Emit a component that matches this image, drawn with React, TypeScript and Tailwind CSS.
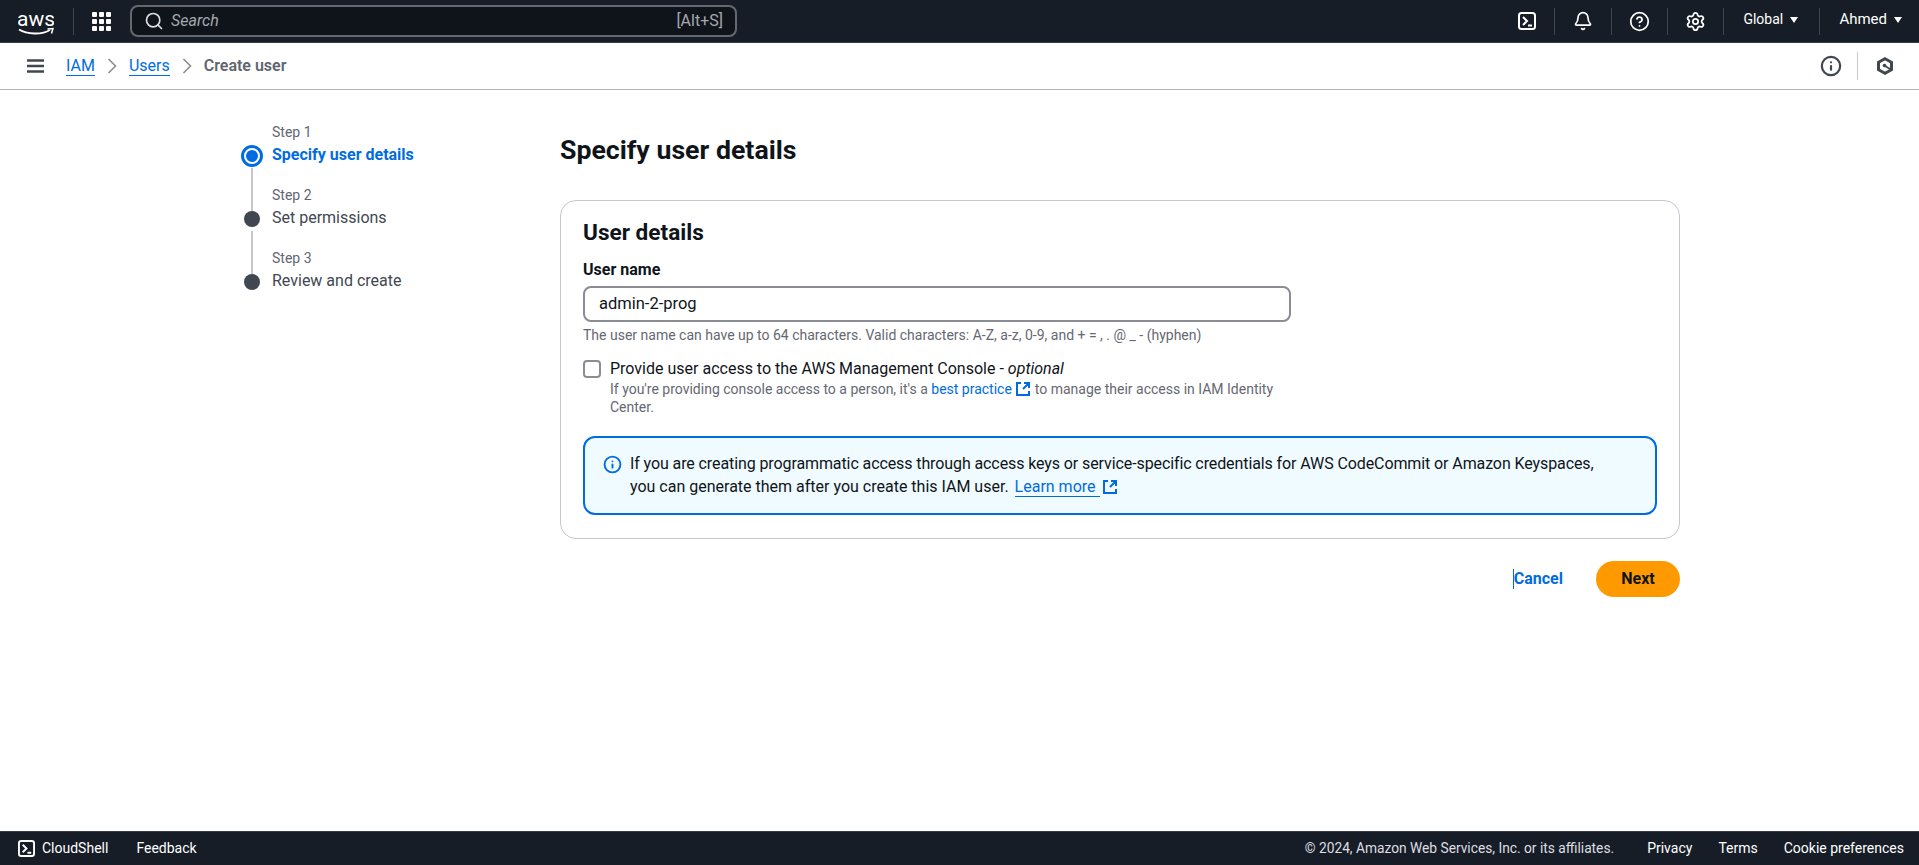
import { Bell, CircleHelp, Settings, Search, Info } from "lucide-react";

const font = "font-['Roboto',sans-serif]";

// Square terminal icon used in the top bar and the footer
const ShellIcon = ({ size = 18 }: { size?: number }) => (
  <svg width={size} height={size} viewBox="0 0 18 18" fill="none" stroke="currentColor" strokeWidth="2">
    <rect x="1" y="1" width="16" height="16" rx="2.5" />
    <path d="M5 5l4 4-4 4M10 13.5h4" />
  </svg>
);

const ExternalIcon = () => (
  <svg width="16" height="16" viewBox="0 0 16 16" fill="none" stroke="#006ce0" strokeWidth="2" className="inline-block align-[-3px]">
    <path d="M6 2H2v12h12v-4M9 2h5v5M14 2 8 8" />
  </svg>
);

const AwsLogo = () => (
  <svg width="36" height="31" viewBox="0 0 36 31" fill="none">
    <text x="18" y="20" textAnchor="middle" fill="#fff" fontSize="21" fontFamily="Roboto, sans-serif">aws</text>
    <path d="M1 23.5c8 5 23 5.5 31 .5" stroke="#fff" strokeWidth="1.8" />
    <path d="M29.5 23 35 22.5l-1.5 5" stroke="#fff" strokeWidth="1.5" />
  </svg>
);

const Divider = () => <div className="w-px h-[27px] bg-[#414750]" />;

const Caret = () => <span className="w-0 h-0 border-x-[4.5px] border-x-transparent border-t-[6px] border-t-white mt-[2px]" />;

const TopNav = () => (
  <header className="h-[43px] shrink-0 bg-[#161d26] border-b border-[#333b45] flex items-center text-white">
    <div className="w-[73px] pl-[18px] pt-[1px]">
      <AwsLogo />
    </div>
    <Divider />
    <div className="ml-[18px] w-[19px] grid grid-cols-3 gap-[2px]">
      {Array.from({ length: 9 }).map((_, i) => (
        <div key={i} className="h-[5px] bg-white rounded-[1px]" />
      ))}
    </div>
    <div className="ml-[19px] w-[607px] h-[32px] rounded-[8px] border-2 border-[#656871] bg-[#0f141a] flex items-center pl-[12px] pr-[12px] text-[16px]">
      <Search size={20} strokeWidth={2} className="text-[#dedee3]" />
      <span className="ml-[7px] italic text-[#a4a8b0]">Search</span>
      <span className="ml-auto text-[#a4a8b0]">[Alt+S]</span>
    </div>
    <div className="ml-auto flex items-center text-[14px]">
      <ShellIcon />
      <div className="ml-[18px]"><Divider /></div>
      <Bell size={20} strokeWidth={2} className="mx-[18px]" />
      <Divider />
      <CircleHelp size={21} strokeWidth={2} className="mx-[17px]" />
      <Divider />
      <Settings size={21} strokeWidth={2} className="mx-[17px]" />
      <Divider />
      <span className="ml-[19px] flex items-center gap-[7px] w-[76px] mb-[4px]">Global <Caret /></span>
      <Divider />
      <span className="ml-[19px] mr-[17px] flex items-center gap-[7px] text-[15px] mb-[4px]">Ahmed <Caret /></span>
    </div>
  </header>
);

const CrumbChevron = () => (
  <svg width="10" height="16" viewBox="0 0 10 16" fill="none" stroke="#8c8c94" strokeWidth="1.6" className="mx-[12px]">
    <path d="M1.5 1 8.5 8l-7 7" />
  </svg>
);

const Breadcrumbs = () => (
  <div className="h-[47px] shrink-0 border-b border-[#b4b4bb] flex items-center text-[16px] text-[#414750]">
    <svg width="17" height="14" viewBox="0 0 17 14" fill="none" stroke="#414750" strokeWidth="2.4" className="ml-[27px]">
      <path d="M0 1.5h17M0 7h17M0 12.5h17" />
    </svg>
    <a className="ml-[22px] text-[#006ce0] border-b border-[#006ce0] leading-[19px]">IAM</a>
    <CrumbChevron />
    <a className="text-[#006ce0] border-b border-[#006ce0] leading-[19px]">Users</a>
    <CrumbChevron />
    <span className="font-semibold text-[#5f6670]">Create user</span>
    <div className="ml-auto flex items-center">
      <Info size={22} strokeWidth={2.4} />
      <div className="w-px h-[28px] bg-[#c6c6cd] ml-[15px]" />
      <svg width="18" height="18" viewBox="0 0 18 18" fill="none" stroke="#414750" strokeWidth="3" className="ml-[18px] mr-[25px]">
        <path d="M9 1.7 15.5 5.3v7.4L9 16.3 2.5 12.7V5.3z" />
        <circle cx="8.5" cy="8.5" r="1.8" fill="#414750" stroke="none" />
        <path d="M9 9l5 3" strokeWidth="1.8" />
      </svg>
    </div>
  </div>
);

const Step = ({ n, label, active }: { n: number; label: string; active?: boolean }) => (
  <div className="flex h-[63px] relative">
    {!active && <div className="absolute top-[3px] left-[10px] w-[2px] h-[43px] bg-[#c6c6cd]" />}
    <div className="w-[22px] flex flex-col items-center justify-end">
      {active ? (
        <div className="w-[22px] h-[22px] rounded-full border-[3px] border-[#006ce0] flex items-center justify-center mb-[-2px]">
          <div className="w-[12px] h-[12px] rounded-full bg-[#006ce0]" />
        </div>
      ) : (
        <div className="w-[16px] h-[16px] rounded-full bg-[#414750] mb-[1px]" />
      )}
    </div>
    <div className="ml-[9px] flex flex-col justify-end">
      <div className="text-[14px] leading-[18px] mb-[3px] text-[#5f6670]">Step {n}</div>
      <div className={active ? "text-[16px] leading-[22px] mb-[-1px] font-bold text-[#006ce0]" : "text-[16px] leading-[22px] mb-[-1px] text-[#414750]"}>{label}</div>
    </div>
  </div>
);

const UserDetailsCard = () => (
  <section className="mt-[33px] h-[339px] rounded-[16px] border border-[#c6c6cd] pt-[18px] px-[22px] text-[#0f141a]">
    <h2 className="text-[22.6px] leading-[28px] font-bold">User details</h2>
    <label className="block mt-[13px] text-[16px] leading-[20px] font-bold">User name</label>
    <div className="mt-[6px] w-[708px] h-[36px] rounded-[8px] border-2 border-[#8c8c94] flex items-center pl-[14px] pt-[1px] text-[16.5px]">admin-2-prog</div>
    <p className="mt-[4px] text-[14px] leading-[18px] text-[#656871]">
      The user name can have up to 64 characters. Valid characters: A-Z, a-z, 0-9, and + = , . @ _ - (hyphen)
    </p>
    <div className="mt-[13px] flex">
      <div className="w-[18px] h-[18px] mt-[3px] rounded-[4px] border-2 border-[#8c8c94] shrink-0" />
      <div className="ml-[9px] w-[670px]">
        <div className="text-[16px] leading-[22px] pt-[1px]">Provide user access to the AWS Management Console - <i>optional</i></div>
        <div className="text-[14px] leading-[18px] text-[#656871]">
          If you're providing console access to a person, it's a <a className="text-[#006ce0]">best practice</a> <ExternalIcon /> to manage their access in IAM Identity Center.
        </div>
      </div>
    </div>
    <div className="mt-[20px] h-[79px] rounded-[12px] border-2 border-[#006ce0] bg-[#f0fbff] flex pt-[14px] pl-[18px] text-[16px] leading-[23px]">
      <Info size={19} strokeWidth={2.4} className="text-[#006ce0] mt-[3px] shrink-0" />
      <div className="ml-[8px] w-[985px]">
        <span className="tracking-[-0.1px]">If you are creating programmatic access through access keys or service-specific credentials for AWS CodeCommit or Amazon Keyspaces,</span> you can generate them after you create this IAM user.{" "}
        <a className="ml-[2px] text-[#006ce0] border-b border-[#006ce0] pr-[4px]">Learn more</a>
        <span className="ml-[2px]"><ExternalIcon /></span>
      </div>
    </div>
  </section>
);

export default function App() {
  return (
    <div className={`h-[865px] flex flex-col overflow-hidden bg-white ${font}`}>
      <TopNav />
      <Breadcrumbs />
      <main className="flex-1 flex pl-[241px]">
        <nav className="w-[319px] pt-[12px]">
          <Step n={1} label="Specify user details" active />
          <Step n={2} label="Set permissions" />
          <Step n={3} label="Review and create" />
        </nav>
        <div className="w-[1120px]">
          <h1 className="mt-[43px] text-[26.7px] leading-[34px] font-bold text-[#0f141a]">Specify user details</h1>
          <UserDetailsCard />
          <div className="mt-[22px] flex items-center justify-end">
            <a className="font-bold text-[16px] text-[#006ce0] border-l border-[#006ce0] leading-[20px]">Cancel</a>
            <button className="ml-[33px] w-[84px] h-[36px] rounded-full bg-[#ff9900] text-[16px] font-bold text-[#0f141a]">Next</button>
          </div>
        </div>
      </main>
      <footer className="h-[34px] shrink-0 bg-[#161d26] border-t border-[#333b45] flex items-center text-[14px] text-white pl-[18px] pr-[15px]">
        <ShellIcon size={17} />
        <span className="ml-[7px]">CloudShell</span>
        <span className="ml-[28px]">Feedback</span>
        <span className="ml-auto text-[13.75px] text-[#dedee3]">© 2024, Amazon Web Services, Inc. or its affiliates.</span>
        <span className="ml-[33px]">Privacy</span>
        <span className="ml-[26px]">Terms</span>
        <span className="ml-[26px]">Cookie preferences</span>
      </footer>
    </div>
  );
}
